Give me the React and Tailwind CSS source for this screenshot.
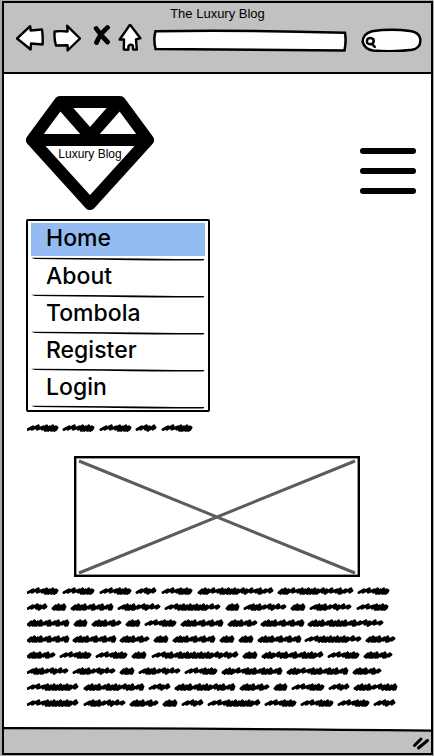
import React from "react";

const menuItems = ["Home", "About", "Tombola", "Register", "Login"];

// Each word is [start, end, pattern]: "l" is a loose stroke, "d" a dense one.
const paragraphLines = [
  [[0, 31, "llldddd"], [36, 67, "llldddd"], [73, 104, "llldddd"], [109, 129, "lldl"], [135, 165, "llldddd"], [171, 246, "dddllddddddldlldll"], [251, 326, "dddllddddddldlldll"], [331, 362, "llldddd"]],
  [[0, 20, "lldl"], [25, 39, "dddd"], [44, 86, "ddddldldld"], [91, 133, "ldddlldll"], [138, 193, "lldddddddddll"], [199, 212, "dddd"], [217, 259, "ldddlldll"], [264, 278, "dddd"], [283, 324, "ldddlldll"], [330, 361, "llldddd"]],
  [[0, 42, "ddddldldld"], [47, 60, "dddd"], [65, 94, "ddddldl"], [99, 113, "dddd"], [118, 149, "llldddd"], [154, 196, "ddddldldld"], [201, 230, "ddddldl"], [234, 277, "ddddldldld"], [281, 356, "ddddldddddldlldll"]],
  [[0, 42, "ddddldldld"], [46, 89, "ddddldldld"], [93, 122, "ddddldl"], [127, 141, "dddd"], [146, 188, "ddddldldld"], [193, 207, "dddd"], [212, 226, "dddd"], [231, 274, "ddddldldld"], [278, 334, "lldddddddddll"], [339, 368, "ddddldl"]],
  [[0, 28, "ddddldl"], [33, 64, "llldddd"], [69, 100, "llldddd"], [105, 119, "dddd"], [125, 211, "llddlddddddddddldldl"], [216, 230, "dddd"], [235, 296, "dddlddldlddddl"], [301, 332, "llldddd"], [337, 365, "ddddldl"]],
  [[0, 41, "ldddlldll"], [46, 88, "ldddlldll"], [93, 107, "dddd"], [112, 153, "ldddlldll"], [158, 190, "llldddd"], [195, 255, "dddlldddldddld"], [260, 321, "dddlldddldddld"], [326, 354, "ddddldl"]],
  [[0, 51, "lllddddddddl"], [57, 117, "ddddlddddlddld"], [122, 143, "lldl"], [148, 208, "ddddlddddlddld"], [213, 242, "ddddldl"], [247, 260, "dddd"], [265, 297, "llldddd"], [302, 322, "lldl"], [327, 370, "ddddlldddd"]],
  [[0, 51, "lllddddddddl"], [57, 98, "ldddlldll"], [103, 131, "ddddldl"], [136, 150, "dddd"], [155, 176, "lldl"], [181, 233, "lllddddddddl"], [238, 269, "llldddd"], [274, 306, "llldddd"], [311, 342, "llldddd"], [347, 368, "lldl"]],
];

const introLine = paragraphLines[0].slice(0, 5);

function wordPath([start, end, pattern]) {
  const weights = [...pattern].map((kind) => (kind === "l" ? 5 : 3));
  const total = weights.reduce((sum, weight) => sum + weight, 0);
  const scale = (end - start - 3) / total;
  let x = start + 1;
  let path = `M${x} 9.5`;
  weights.forEach((weight, index) => {
    const step = weight * scale;
    const top = index % 2 ? 5.8 : 6.8;
    if (pattern[index] === "l") {
      path += `L${x + step} ${top}L${x + step * 0.75} 9.2`;
    } else {
      path += `L${x + step} ${top}L${x + step * 0.5} 10.4L${x + step + 1} 7.5L${x + step} ${index % 2 ? 10.2 : 9.4}`;
    }
    x += step;
  });
  return path + `L${end - 1} 7.5`;
}

function ScribbleLine({ words }) {
  return (
    <svg className="block h-4 w-[372px] max-w-full" viewBox="0 0 372 16" preserveAspectRatio="xMinYMid meet" aria-hidden="true">
      <path d={words.map(wordPath).join("")} fill="none" stroke="#000" strokeWidth="2.9" strokeLinecap="round" strokeLinejoin="round" />
    </svg>
  );
}

function NavButton({ label, className, viewBox, children }) {
  return (
    <button type="button" aria-label={label} className={"h-8 shrink-0 " + className}>
      <svg className="block h-full w-full" viewBox={viewBox} fill="#fff" stroke="#000" strokeWidth="2.4" strokeLinejoin="round" strokeLinecap="round">
        {children}
      </svg>
    </button>
  );
}

function BrowserHeader() {
  return (
    <header className="border-b-2 border-black bg-[#c1c1c1] pb-[15px]">
      <h1 className="h-5 pt-px text-center text-[13px] leading-5">The Luxury Blog</h1>
      <div className="flex h-[34px] items-center pr-[9px] pl-3">
        <NavButton label="Back" className="w-7" viewBox="0 3 28 32">
          <path d="M1 17.5L14.2 5.2L14.6 9.5L26 8.5Q27 15 26.6 23.5L15 22.5L14.6 28.5Q8 23 1 17.5Z" />
        </NavButton>
        <NavButton label="Forward" className="ml-[9px] w-7" viewBox="0 3 28 32">
          <path d="M1.6 10.5Q7 9.8 14.6 10.5L14.2 4.8L27 17.5L14.6 29.5L14.6 24.2L3 24.5Q1 18 1.6 10.5Z" />
        </NavButton>
        <NavButton label="Stop" className="ml-3 w-[18px]" viewBox="0 2 18 32">
          <path d="M3.2 6.5Q7.5 13 14.5 20M14.5 5.5Q7 12 3.5 20.5" fill="none" strokeWidth="4.8" />
        </NavButton>
        <NavButton label="Home page" className="ml-[7px] w-6" viewBox="0 1 24 32">
          <path d="M12 1.6L22.4 15.2L18 16.5L18.8 26.6L15.2 26.5L14.8 22.5Q12.5 20.5 10.5 23L10.2 26.8L5.8 26.6L6 16.5L1.6 16.5Q6.5 10 12 1.6Z" />
        </NavButton>
        <div className="ml-[11px] grid h-6 min-w-0 flex-1 grid-cols-1 grid-rows-1">
          <svg className="col-start-1 row-start-1 h-full w-full" viewBox="0 0 194 24" preserveAspectRatio="none" aria-hidden="true">
            <path d="M2.5 3.2Q90 1.8 192 4.8Q193.4 13 191.5 22.6Q100 22 2.5 21Q.2 11 2.5 3.2Z" fill="#fff" stroke="#000" strokeWidth="2.5" />
          </svg>
          <input type="text" aria-label="Address" className="col-start-1 row-start-1 w-full min-w-0 bg-transparent px-2 text-xs outline-none" />
        </div>
        <div className="ml-[14px] grid h-6 w-[61px] shrink-0 grid-cols-1 grid-rows-1">
          <svg className="col-start-1 row-start-1 h-full w-full" viewBox="0 0 61 24" aria-hidden="true">
            <path d="M11 3.2Q30 .4 49 3Q58 4.1 59.2 10.6Q60.5 20 51 21.8Q32 24.4 12 22.5Q3.5 21 1.6 13.6Q2 5.6 11 3.2Z" fill="#fff" stroke="#000" strokeWidth="2.5" />
            <path d="M6.5 11Q9.5 8.8 12.4 11.2Q13.4 13.8 11.2 15.8Q8 16.8 6.3 15Q5.3 13 6.5 11ZM10.8 15.8L13.8 18.8" fill="none" stroke="#000" strokeWidth="2.5" strokeLinecap="round" />
          </svg>
          <input type="search" aria-label="Search" className="col-start-1 row-start-1 w-full min-w-0 bg-transparent pr-2 pl-5 text-xs outline-none" />
        </div>
      </div>
    </header>
  );
}

function DiamondLogo() {
  return (
    <a href="#home" className="grid h-[114px] w-32 grid-cols-1 grid-rows-1 text-black">
      <svg className="col-start-1 row-start-1 h-full w-full" viewBox="0 0 128 114" fill="none" stroke="#000" strokeWidth="12" strokeLinejoin="round" strokeLinecap="round" aria-hidden="true">
        <path d="M34 6H94L122 44L64 108L6 44ZM6 44H122M34 6L64 40L94 6" />
      </svg>
      <span className="col-start-1 row-start-1 pt-[50px] text-center text-xs leading-4">Luxury Blog</span>
    </a>
  );
}

function MenuRule() {
  return (
    <svg className="block h-1 w-full" viewBox="0 0 174 4" preserveAspectRatio="none" aria-hidden="true">
      <path d="M0 .8Q50 .8 110 1.6Q150 2.1 173 2.1Q174 2.8 172 3.4Q140 3.8 100 3.2Q40 2.4 4 2.1Z" fill="#000" />
    </svg>
  );
}

function Menu() {
  return (
    <nav aria-label="Main" className="mt-[9px] w-[184px] rounded-xs border-2 border-black px-[3px] pt-0.5 pb-px">
      <ul>
        {menuItems.map((item, index) => (
          <li key={item}>
            <a
              href={"#" + item.toLowerCase()}
              className={
                "block h-[33px] pl-[15px] font-[Inter,sans-serif] text-[23px] leading-[30px] font-medium " +
                (index === 0 ? "mb-px bg-[#94bbf2]" : "")
              }
            >
              {item}
            </a>
            <MenuRule />
          </li>
        ))}
      </ul>
    </nav>
  );
}

export default function App() {
  return (
    <div className="flex min-h-screen flex-col bg-[#aaaaaa] pt-px pr-px pb-px pl-[2px] font-['Liberation_Sans',Arial,sans-serif] text-black">
      <div className="flex flex-1 flex-col border-2 border-black bg-white">
        <BrowserHeader />
        <main className="flex-1 pt-[22px] pr-6 pl-[22px]">
          <div className="flex items-start justify-between">
            <DiamondLogo />
            <button type="button" aria-label="Toggle menu" className="mt-[52px] -mr-[9px] flex w-14 flex-col gap-[14px]">
              <span className="h-1.5 w-full rounded-full bg-black" />
              <span className="h-1.5 w-full rounded-full bg-black" />
              <span className="h-1.5 w-full rounded-full bg-black" />
            </button>
          </div>
          <Menu />
          <div className="mt-2 pl-px">
            <ScribbleLine words={introLine} />
          </div>
          <svg className="mx-auto mt-5 block h-[121px] w-[286px] max-w-full" viewBox="0 0 286 121" preserveAspectRatio="none" role="img" aria-label="Picture placeholder">
            <rect x="1.2" y="1.2" width="283.6" height="118.6" fill="#fff" stroke="#000" strokeWidth="2.4" />
            <path d="M5 5L281 117M281 5L5 117" stroke="#5c5c5c" strokeWidth="3" />
          </svg>
          <div className="mt-1.5 pl-px">
            {paragraphLines.map((words, index) => (
              <ScribbleLine key={index} words={words} />
            ))}
          </div>
        </main>
        <footer className="h-[26px] bg-[#c1c1c1]">
          <svg className="block h-full w-full" viewBox="0 0 426 26" preserveAspectRatio="none" aria-hidden="true">
            <path d="M0 0H426V4L0 1.5Z" fill="#fff" />
            <path d="M0 1.2Q200 1.2 426 3.6" fill="none" stroke="#000" strokeWidth="2.2" />
            <path d="M409.5 18.5L416 12M413.5 21L422.5 13.5" fill="none" stroke="#000" strokeWidth="3" strokeLinecap="round" />
          </svg>
        </footer>
      </div>
    </div>
  );
}
